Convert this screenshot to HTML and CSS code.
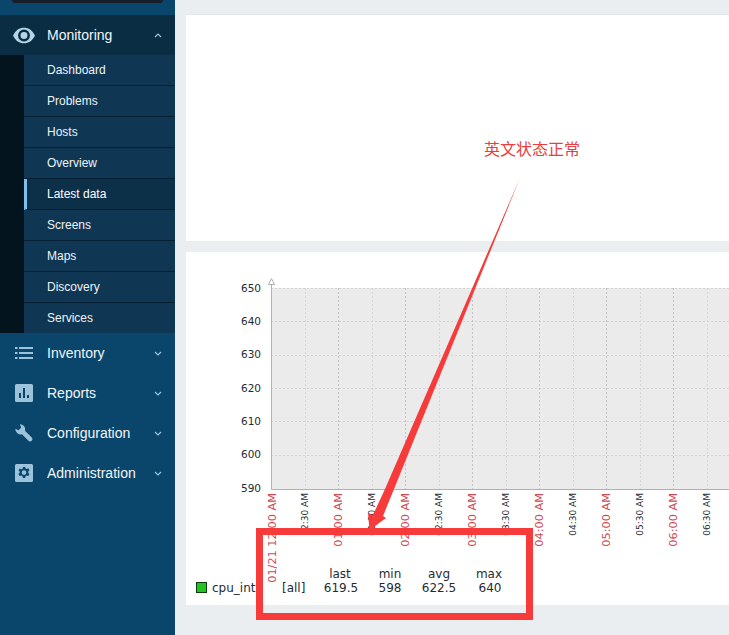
FILE: index.html
```html
<!DOCTYPE html>
<html lang="en">
<head>
<meta charset="utf-8">
<title>Latest data</title>
<link rel="stylesheet" href="styles.css">
</head>
<body>
<div class="app">
  <aside class="sidebar">
    <div class="search-wrap"><div class="search"></div></div>
    <nav>
      <div class="menu-row is-open">
        <svg class="menu-icon" viewBox="0 3 24 18"><path fill-rule="evenodd" d="M0 12C3 6 7 3.500 12 3.500S21 6 24 12c-3 6-7 8.500-12 8.500S3 18 0 12zm12-6.500a6.500 6.500 0 1 0 0 13 6.500 6.500 0 0 0 0-13zm0 2.700a3.800 3.800 0 1 1 0 7.600 3.800 3.800 0 0 1 0-7.600z"/></svg>
        <span class="menu-label">Monitoring</span>
        <svg class="chev" viewBox="0 0 8 5"><path d="M1 4l3-3 3 3"/></svg>
      </div>
      <div class="submenu">
        <ul class="sub-list">
          <li class="sub-item">Dashboard</li>
          <li class="sub-item">Problems</li>
          <li class="sub-item">Hosts</li>
          <li class="sub-item">Overview</li>
          <li class="sub-item is-active">Latest data</li>
          <li class="sub-item">Screens</li>
          <li class="sub-item">Maps</li>
          <li class="sub-item">Discovery</li>
          <li class="sub-item">Services</li>
        </ul>
      </div>
      <div class="menu-row">
        <svg class="menu-icon" viewBox="0 0 18 18"><path d="M0 3h2.500v2H0zM4 3h14v2H4zM0 8h2.500v2H0zM4 8h14v2H4zM0 13h2.500v2H0zM4 13h14v2H4z"/></svg>
        <span class="menu-label">Inventory</span>
        <svg class="chev" viewBox="0 0 8 5"><path d="M1 1l3 3 3-3"/></svg>
      </div>
      <div class="menu-row">
        <svg class="menu-icon" viewBox="0 0 18 18"><path fill-rule="evenodd" d="M1.500 0h15A1.500 1.500 0 0 1 18 1.500v15a1.500 1.500 0 0 1-1.500 1.500h-15A1.500 1.500 0 0 1 0 16.500v-15A1.500 1.500 0 0 1 1.500 0zM4 9v5h2V9zm4-5v10h2V4zm4 7v3h2v-3z"/></svg>
        <span class="menu-label">Reports</span>
        <svg class="chev" viewBox="0 0 8 5"><path d="M1 1l3 3 3-3"/></svg>
      </div>
      <div class="menu-row">
        <svg class="menu-icon" viewBox="0 0 18 18"><path d="M4.800.3A5.400 5.400 0 0 1 10.200 7L17.200 14A2.400 2.400 0 0 1 14 17.200L7 10.200A5.400 5.400 0 0 1 .3 4.800L3.500 6.300 6.300 3.500Z"/></svg>
        <span class="menu-label">Configuration</span>
        <svg class="chev" viewBox="0 0 8 5"><path d="M1 1l3 3 3-3"/></svg>
      </div>
      <div class="menu-row">
        <svg class="menu-icon" viewBox="0 0 18 18"><path fill-rule="evenodd" d="M1.500 0h15A1.500 1.500 0 0 1 18 1.500v15a1.500 1.500 0 0 1-1.500 1.500h-15A1.500 1.500 0 0 1 0 16.500v-15A1.500 1.500 0 0 1 1.500 0zM8 3l-.4 1.700-1.300.6L4.800 4.400 3.500 6.200l1.200 1.200v1.400L3.400 10l1.200 2 1.700-.6 1.200.8L8 14h2.100l.4-1.800 1.200-.7 1.600.6 1.200-2-1.300-1.200V7.500l1.300-1.200-1.200-2-1.600.7-1.200-.7L10.100 3zM9 6.300a2.300 2.300 0 1 1 0 4.600 2.300 2.300 0 0 1 0-4.600z"/></svg>
        <span class="menu-label">Administration</span>
        <svg class="chev" viewBox="0 0 8 5"><path d="M1 1l3 3 3-3"/></svg>
      </div>
    </nav>
  </aside>
  <main class="content">
    <section class="card card-top"></section>
    <section class="card card-graph">
      <svg class="graph" width="543" height="353" viewBox="186 252 543 353">
        <rect class="plot" x="271" y="288" width="458" height="201"/>
        <g class="grid-h">
          <path d="M271 288.500H729M271 321.500H729M271 355.500H729M271 388.500H729M271 421.500H729M271 455.500H729"/>
        </g>
        <g class="grid-v">
          <path d="M305.500 288V489M372.500 288V489M439.500 288V489M506.500 288V489M573.500 288V489M640.500 288V489M707.500 288V489"/>
        </g>
        <g class="grid-v-major">
          <path d="M338.500 288V489M405.500 288V489M472.500 288V489M539.500 288V489M606.500 288V489M673.500 288V489"/>
        </g>
        <path class="axis" d="M271.500 284V489.500H729"/>
        <path class="axis-tip" d="M271.500 278.500L268.500 284.500H274.500Z"/>
        <g class="y-labels">
          <text x="241" y="292">650</text>
          <text x="241" y="325">640</text>
          <text x="241" y="358">630</text>
          <text x="241" y="392">620</text>
          <text x="241" y="425">610</text>
          <text x="241" y="458">600</text>
          <text x="241" y="492">590</text>
        </g>
        <g class="x-major">
          <text transform="translate(276 493) rotate(-90)">01/21 12:00 AM</text>
          <text transform="translate(342 493) rotate(-90)">01:00 AM</text>
          <text transform="translate(409 493) rotate(-90)">02:00 AM</text>
          <text transform="translate(476 493) rotate(-90)">03:00 AM</text>
          <text transform="translate(543 493) rotate(-90)">04:00 AM</text>
          <text transform="translate(610 493) rotate(-90)">05:00 AM</text>
          <text transform="translate(677 493) rotate(-90)">06:00 AM</text>
        </g>
        <g class="x-minor">
          <text transform="translate(308 493) rotate(-90)">12:30 AM</text>
          <text transform="translate(375 493) rotate(-90)">01:30 AM</text>
          <text transform="translate(442 493) rotate(-90)">02:30 AM</text>
          <text transform="translate(509 493) rotate(-90)">03:30 AM</text>
          <text transform="translate(576 493) rotate(-90)">04:30 AM</text>
          <text transform="translate(643 493) rotate(-90)">05:30 AM</text>
          <text transform="translate(710 493) rotate(-90)">06:30 AM</text>
        </g>
        <rect class="swatch" x="196.500" y="582.500" width="10" height="10"/>
        <g class="legend">
          <text x="212" y="592">cpu_int</text>
          <text x="282" y="592">[all]</text>
          <text class="mid" x="340" y="578">last</text>
          <text class="mid" x="390" y="578">min</text>
          <text class="mid" x="439" y="578">avg</text>
          <text class="mid" x="489" y="578">max</text>
          <text class="mid" x="341" y="592">619.5</text>
          <text class="mid" x="390" y="592">598</text>
          <text class="mid" x="439" y="592">622.5</text>
          <text class="mid" x="490" y="592">640</text>
        </g>
      </svg>
    </section>
    <svg class="annotation" width="554" height="635" viewBox="175 0 554 635">
      <text class="note" x="484" y="155">英文状态正常</text>
      <path class="note-arrow" d="M520 178L394 489 383 516 386 518 369.500 530 368 513 373 515 385 489Z"/>
      <rect class="note-box" x="259.500" y="531.500" width="270" height="85"/>
    </svg>
  </main>
</div>
</body>
</html>
```

FILE: styles.css
```css
* {
  box-sizing: border-box;
}

html,
body {
  margin: 0;
  height: 100%;
  overflow: hidden;
}

body {
  background: #ebeef0;
  font-family: "Liberation Sans", Arial, sans-serif;
}

.app {
  display: flex;
  height: 635px;
}

.sidebar {
  flex: 0 0 175px;
  background: #0a466c;
  color: #f2f5f7;
}

.search-wrap {
  height: 15px;
  padding: 0 12px;
}

.search {
  height: 3px;
  background: #16202a;
  border-radius: 0 0 3px 3px;
}

.menu-row {
  display: flex;
  align-items: center;
  height: 40px;
  padding-left: 14px;
  font-size: 14px;
}

.menu-row.is-open {
  background: #0a2d44;
}

.menu-icon {
  flex: 0 0 20px;
  width: 20px;
  height: 18px;
  margin-right: 13px;
  fill: #9cc3d9;
}

.menu-row.is-open .menu-icon {
  flex-basis: 22px;
  width: 22px;
  height: 17px;
  margin-left: -1px;
  margin-right: 12px;
  fill: #b5d4e6;
}

.menu-label {
  flex: 1;
}

.chev {
  width: 8px;
  height: 5px;
  margin-right: 13px;
  fill: none;
  stroke: #9cc3d9;
  stroke-width: 1.200;
}

.submenu {
  height: 278px;
  padding-left: 24px;
  background: #03141f;
}

.sub-list {
  margin: 0;
  padding: 0;
  list-style: none;
  background: #0f3754;
}

.sub-item {
  height: 31px;
  padding-left: 23px;
  border-bottom: 1px solid #071f33;
  font-size: 12px;
  line-height: 30px;
  color: #eef3f6;
}

.sub-item:last-child {
  height: 30px;
  border-bottom: 0;
}

.sub-item.is-active {
  padding-left: 20px;
  border-left: 3px solid #7cc0ee;
  background: #0d3049;
  color: #ffffff;
}

.content {
  position: relative;
  flex: 1;
  min-width: 0;
  padding: 14px 0 0 11px;
  overflow: hidden;
}

.card {
  background: #ffffff;
  border-top: 1px solid #e2e6e9;
}

.card-top {
  height: 227px;
  margin-bottom: 11px;
}

.card-graph {
  height: 353px;
  border-top: 0;
}

.graph {
  display: block;
}

.plot {
  fill: #ebebeb;
}

.grid-h path,
.grid-v path,
.grid-v-major path {
  fill: none;
  stroke-width: 1;
  stroke-dasharray: 2 2;
}

.grid-h path {
  stroke: #d2d2d2;
}

.grid-v path {
  stroke: #d6d6d6;
}

.grid-v-major path {
  stroke: #bfc4c7;
}

.axis {
  fill: none;
  stroke: #acb1b4;
}

.axis-tip {
  fill: #ffffff;
  stroke: #acb1b4;
}

.y-labels text {
  font-family: "DejaVu Sans", sans-serif;
  font-size: 10.500px;
  fill: #1f2c33;
}

.x-major text,
.x-minor text {
  font-family: "DejaVu Sans", sans-serif;
  text-anchor: end;
}

.x-major text {
  font-size: 11.300px;
  fill: #d04a52;
}

.x-minor text {
  font-size: 9px;
  fill: #1f2c33;
}

.swatch {
  fill: #22c322;
  stroke: #0c3a0c;
}

.legend text {
  font-family: "DejaVu Sans", sans-serif;
  font-size: 12px;
  fill: #1f2c33;
}

.legend .mid {
  text-anchor: middle;
}

.annotation {
  position: absolute;
  top: 0;
  left: 0;
}

.note {
  font-family: "Noto Sans CJK SC", sans-serif;
  font-size: 16px;
  fill: #e8403e;
}

.note-arrow {
  fill: #f73a3a;
}

.note-box {
  fill: none;
  stroke: #f73a3a;
  stroke-width: 7;
}
```
